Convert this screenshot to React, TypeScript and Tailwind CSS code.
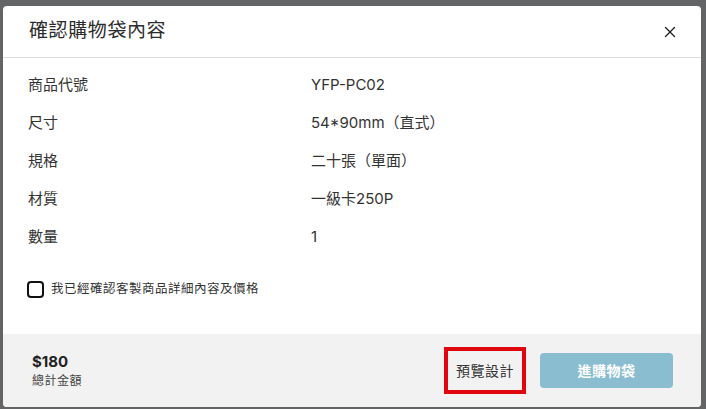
import { X } from 'lucide-react';

const rows: [string, string][] = [
  ['商品代號', 'YFP-PC02'],
  ['尺寸', '54*90mm（直式）'],
  ['規格', '二十張（單面）'],
  ['材質', '一級卡250P'],
  ['數量', '1'],
];

const font = { fontFamily: 'Inter, "Noto Sans CJK TC", sans-serif' };

export default function App() {
  return (
    <div className="w-[706px] h-[409px] bg-[#636466] pt-[6px] pl-[3px] overflow-hidden" style={font}>
      <div className="w-[698px] h-[401px] bg-white rounded-[4px] flex flex-col overflow-hidden text-[#333]">
        {/* Header */}
        <div className="h-[52px] shrink-0 flex items-center justify-between pl-[26px] pr-[22px] border-b border-[#dedede]">
          <h1 className="text-[19px] tracking-[0.6px] text-[#2b2b2b]">確認購物袋內容</h1>
          <X className="w-[18px] h-[18px] text-[#222]" strokeWidth={1.8} />
        </div>

        {/* Body */}
        <div className="flex-1 pt-[8px] pl-[25px]">
          {rows.map(([label, value]) => (
            <div key={label} className="h-[38px] flex items-center text-[15px]">
              <span className="w-[283px] text-[#333]">{label}</span>
              <span className="text-[#333]">{value}</span>
            </div>
          ))}
          <label className="mt-[23px] h-[20px] flex items-center gap-[7px]">
            <span className="w-[17px] h-[17px] border-2 border-[#111] rounded-[4px] ml-[-1px]" />
            <span className="text-[12.5px] text-[#333] tracking-[0.5px]">我已經確認客製商品詳細內容及價格</span>
          </label>
        </div>

        {/* Footer */}
        <div className="h-[73px] shrink-0 bg-[#f2f2f2] flex items-center justify-between pl-[29px] pr-[28px]">
          <div className="flex flex-col">
            <span className="text-[15px] font-bold leading-[20px] text-[#222]">$180</span>
            <span className="text-[12px] leading-[18px] text-[#444] tracking-[0.5px]">總計金額</span>
          </div>
          <div className="flex items-center gap-[14px]">
            <button className="w-[82px] h-[47px] border-4 border-[#e0060d] text-[14px] text-[#333] tracking-[0.5px]">
              預覽設計
            </button>
            <button className="w-[133px] h-[35px] rounded-[4px] bg-[#8bbdd0] text-white text-[14px] font-bold tracking-[0.5px]">
              進購物袋
            </button>
          </div>
        </div>
      </div>
    </div>
  );
}
